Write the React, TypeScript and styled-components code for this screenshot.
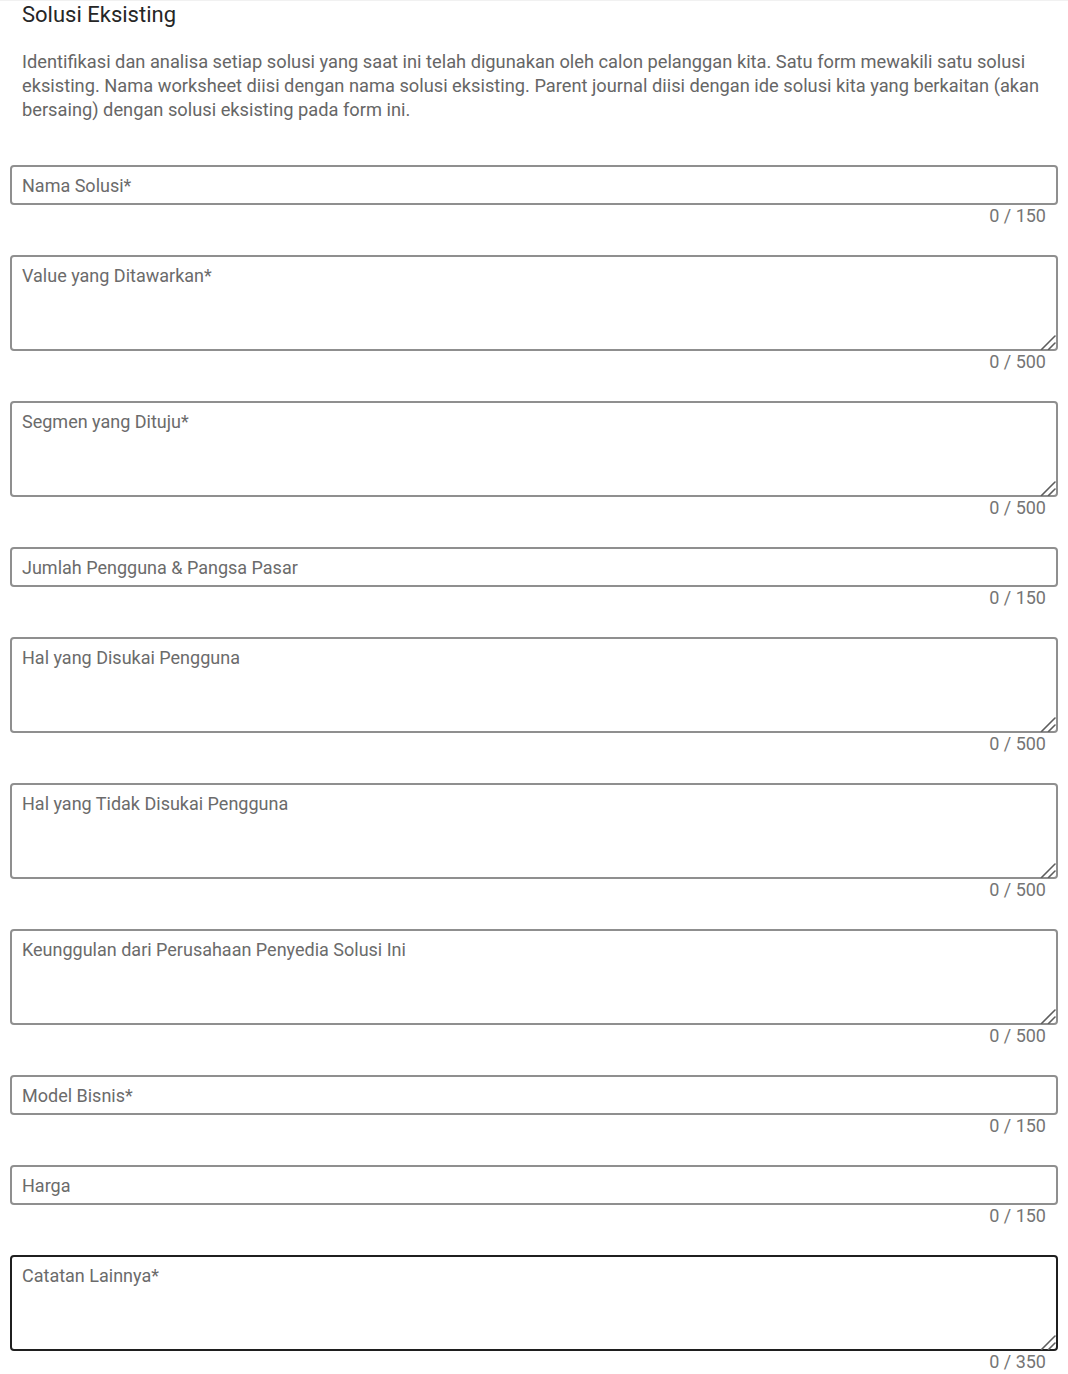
import React from "react";
import styled, { createGlobalStyle } from "styled-components";

const GlobalStyle = createGlobalStyle`
  html, body { margin: 0; padding: 0; background: #ffffff; }
  body { font-family: Roboto, "Noto Sans", Arial, sans-serif; }
  * { box-sizing: border-box; }
`;

const Page = styled.div`
  padding: 0 10px 12px;
  border-top: 1px solid #f1f1f1;
  width: 1068px;
`;

const Title = styled.h2`
  margin: 0;
  padding: 0 12px;
  font-size: 22px;
  line-height: 28px;
  font-weight: 400;
  color: #262626;
`;

const Description = styled.p`
  margin: 21px 0 43px;
  padding: 0 12px;
  font-size: 18.25px;
  line-height: 24px;
  color: #666666;
`;

const Field = styled.div`
  display: flex;
  flex-direction: column;
  margin-bottom: 29px;
`;

const baseControl = `
  width: 100%;
  border: 2px solid #8f8f8f;
  border-radius: 4px;
  font-family: Roboto, "Noto Sans", Arial, sans-serif;
  font-size: 18px;
  color: #222;
  background: #fff;
  outline: none;
  margin: 0;
  &::placeholder { color: #6b6b6b; opacity: 1; }
`;

const TextInput = styled.input<{ $active?: boolean }>`
  ${baseControl}
  height: 40px;
  padding: 0 10px;
  border-color: ${(p) => (p.$active ? "#1f1f1f" : "#8f8f8f")};
`;

const AreaWrap = styled.div`
  position: relative;
  height: 96px;
`;

const TextArea = styled.textarea<{ $active?: boolean }>`
  ${baseControl}
  display: block;
  height: 100%;
  padding: 8px 10px;
  line-height: 22px;
  resize: none;
  border-color: ${(p) => (p.$active ? "#1f1f1f" : "#8f8f8f")};
`;

const Grip = styled.svg`
  position: absolute;
  right: 2px;
  bottom: 1px;
  width: 16px;
  height: 16px;
  pointer-events: none;
`;

const Counter = styled.div`
  margin-top: 1px;
  padding-right: 12px;
  text-align: right;
  font-size: 18px;
  line-height: 20px;
  color: #757575;
`;

type FieldDef = {
  label: string;
  multiline: boolean;
  max: number;
  active?: boolean;
};

const fields: FieldDef[] = [
  { label: "Nama Solusi*", multiline: false, max: 150 },
  { label: "Value yang Ditawarkan*", multiline: true, max: 500 },
  { label: "Segmen yang Dituju*", multiline: true, max: 500 },
  { label: "Jumlah Pengguna & Pangsa Pasar", multiline: false, max: 150 },
  { label: "Hal yang Disukai Pengguna", multiline: true, max: 500 },
  { label: "Hal yang Tidak Disukai Pengguna", multiline: true, max: 500 },
  { label: "Keunggulan dari Perusahaan Penyedia Solusi Ini", multiline: true, max: 500 },
  { label: "Model Bisnis*", multiline: false, max: 150 },
  { label: "Harga", multiline: false, max: 150 },
  { label: "Catatan Lainnya*", multiline: true, max: 350, active: true },
];

function ResizeGrip() {
  return (
    <Grip viewBox="0 0 16 16" aria-hidden="true">
      <line x1="1.5" y1="15.5" x2="15" y2="2" stroke="#5e5e5e" strokeWidth="1.6" strokeLinecap="round" />
      <line x1="8.5" y1="15.5" x2="15" y2="9" stroke="#5e5e5e" strokeWidth="1.6" strokeLinecap="round" />
    </Grip>
  );
}

export default function App() {
  return (
    <>
      <GlobalStyle />
      <Page>
        <Title>Solusi Eksisting</Title>
        <Description>
          Identifikasi dan analisa setiap solusi yang saat ini telah digunakan oleh calon pelanggan kita. Satu form
          mewakili satu solusi eksisting. Nama worksheet diisi dengan nama solusi eksisting. Parent journal diisi
          dengan ide solusi kita yang berkaitan (akan bersaing) dengan solusi eksisting pada form ini.
        </Description>
        {fields.map((f) => (
          <Field key={f.label}>
            {f.multiline ? (
              <AreaWrap>
                <TextArea placeholder={f.label} maxLength={f.max} $active={f.active} />
                <ResizeGrip />
              </AreaWrap>
            ) : (
              <TextInput placeholder={f.label} maxLength={f.max} $active={f.active} />
            )}
            <Counter>0 / {f.max}</Counter>
          </Field>
        ))}
      </Page>
    </>
  );
}
